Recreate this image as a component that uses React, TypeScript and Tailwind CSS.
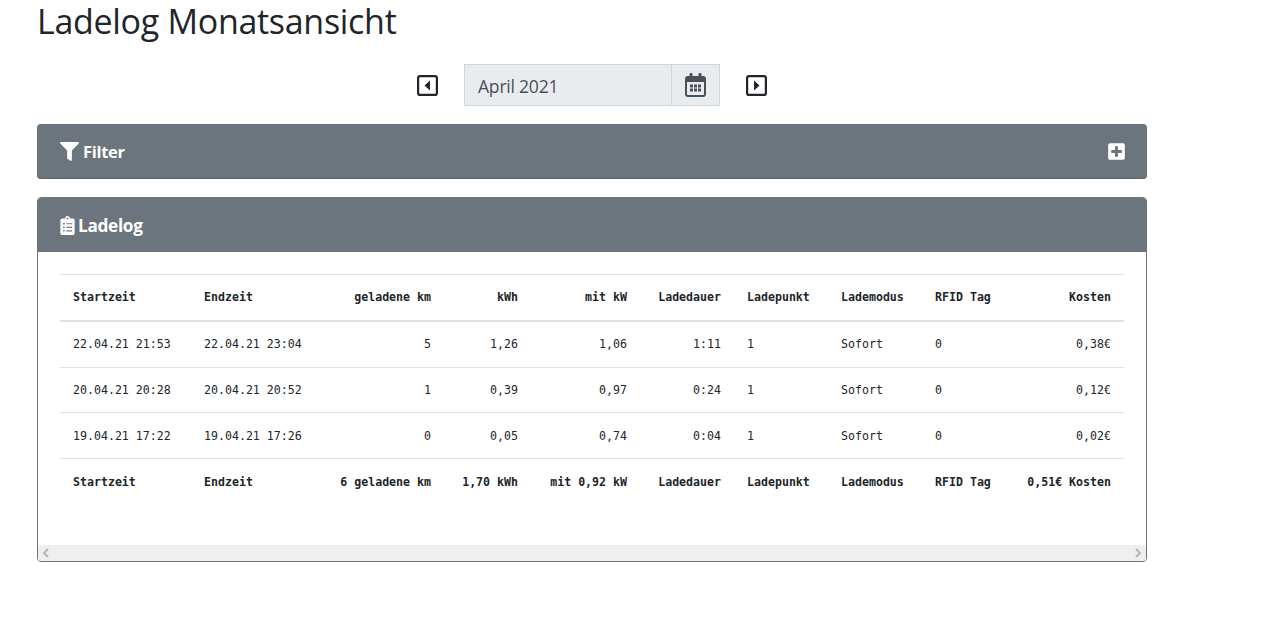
import React from "react";
import { FaFilter, FaClipboardList, FaPlusSquare } from "react-icons/fa";

const widths = [131, 124, 129, 87, 109, 94, 94, 94, 92, 110];
const align = ["l", "l", "r", "r", "r", "r", "l", "l", "l", "r"];
const head = ["Startzeit", "Endzeit", "geladene km", "kWh", "mit kW", "Ladedauer", "Ladepunkt", "Lademodus", "RFID Tag", "Kosten"];
const foot = ["Startzeit", "Endzeit", "6 geladene km", "1,70 kWh", "mit 0,92 kW", "Ladedauer", "Ladepunkt", "Lademodus", "RFID Tag", "0,51€ Kosten"];
const rows = [
  ["22.04.21 21:53", "22.04.21 23:04", "5", "1,26", "1,06", "1:11", "1", "Sofort", "0", "0,38€"],
  ["20.04.21 20:28", "20.04.21 20:52", "1", "0,39", "0,97", "0:24", "1", "Sofort", "0", "0,12€"],
  ["19.04.21 17:22", "19.04.21 17:26", "0", "0,05", "0,74", "0:04", "1", "Sofort", "0", "0,02€"],
];
const rowH = ["h-[47px]", "h-[45px]", "h-[46px]"];
const rowPad = ["pb-[0px]", "pt-[2px]", "pt-[2px]"];
const cell = (i: number) => (align[i] === "r" ? "text-right" : "text-left");

function Row({ cells, bold, pad, className }: { cells: string[]; bold?: boolean; pad?: string; className: string }) {
  return (
    <tr className={className}>
      {cells.map((c, i) => (
        <td key={i} className={`px-[13px] whitespace-nowrap ${pad ?? ""} ${cell(i)} ${bold ? "font-bold" : ""}`}>
          {c}
        </td>
      ))}
    </tr>
  );
}

function CaretBox({ dir }: { dir: "l" | "r" }) {
  return (
    <svg width="21" height="21" viewBox="0 0 21 21" className="text-[#212529]">
      <rect x="1.1" y="1.1" width="18.8" height="18.8" rx="2" fill="none" stroke="currentColor" strokeWidth="2.2" />
      <path d={dir === "l" ? "M13 5.5 V15.5 L7.5 10.5 Z" : "M8 5.5 V15.5 L13.5 10.5 Z"} fill="currentColor" />
    </svg>
  );
}

function CalendarIcon() {
  return (
    <svg width="21" height="24" viewBox="0 0 21 24" className="text-[#495057]">
      <rect x="1" y="4" width="19" height="19" rx="2" fill="none" stroke="currentColor" strokeWidth="2" />
      <rect x="1" y="4" width="19" height="5" fill="currentColor" />
      <rect x="4.5" y="0" width="3" height="6" rx="1" fill="currentColor" />
      <rect x="13.5" y="0" width="3" height="6" rx="1" fill="currentColor" />
      {[5, 9, 13].map((x) =>
        [11.5, 15.5].map((y) => <rect key={`${x}-${y}`} x={x} y={y} width="3" height="3" fill="currentColor" />)
      )}
    </svg>
  );
}

export default function App() {
  return (
    <div className="w-[1269px] h-[630px] bg-white overflow-hidden font-['Open_Sans','Noto_Sans',sans-serif] text-[#212529]">
      <div className="w-[1110px] ml-[37px]">
        <h1 className="text-[34px] leading-[46px] -mt-[2px] font-normal tracking-[-0.3px]">Ladelog Monatsansicht</h1>

        <div className="flex items-center justify-center mt-[20px] h-[42px]">
          <CaretBox dir="l" />
          <div className="flex h-[42px] w-[256px] mx-[26px] bg-[#e9ecef] border border-[#ced4da] text-[#495057]">
            <div className="flex-1 flex items-center pl-[13px] pt-[2px] text-[17.6px] tracking-[-0.25px]">April 2021</div>
            <div className="w-[48px] border-l border-[#ced4da] flex items-center justify-center">
              <CalendarIcon />
            </div>
          </div>
          <CaretBox dir="r" />
        </div>

        <div className="mt-[18px] h-[55px] rounded-[4px] bg-[#6c757d] border-b border-[#5d656c] text-white flex items-center justify-between pl-[23px] pr-[22px]">
          <div className="flex items-center gap-[4px] text-[16.5px] font-bold tracking-[-0.3px]">
            <FaFilter className="w-[19px] h-[19px]" />
            <span className="pt-[2px]">Filter</span>
          </div>
          <FaPlusSquare className="w-[17px] h-[19px]" />
        </div>

        <div className="mt-[18px] rounded-[4px] border border-[#6c757d] h-[365px] flex flex-col overflow-hidden">
          <div className="h-[54px] shrink-0 bg-[#6c757d] text-white flex items-center pl-[22px] gap-[3px] text-[17.2px] font-bold tracking-[-0.3px]">
            <FaClipboardList className="w-[15px] h-[19px]" />
            <span className="pt-[2px]">Ladelog</span>
          </div>
          <div className="flex-1 pt-[22px] pl-[22px]">
            <table className="border-collapse table-fixed w-[1064px] font-['DejaVu_Sans_Mono',monospace] text-[11.6px] text-[#212529]">
              <colgroup>
                {widths.map((w, i) => (
                  <col key={i} style={{ width: w }} />
                ))}
              </colgroup>
              <tbody>
                <Row cells={head} bold className="h-[46px] border-t border-b-2 border-[#dee2e6]" />
                {rows.map((r, i) => (
                  <Row key={i} cells={r} pad={rowPad[i]} className={`${rowH[i]} border-b border-[#dee2e6]`} />
                ))}
                <Row cells={foot} bold pad="pt-[2px]" className="h-[46px]" />
              </tbody>
            </table>
          </div>
          <div className="h-[16px] shrink-0 bg-[#efefef] flex items-center justify-between px-[4px] text-[#b5b5b5]">
            <svg width="8" height="10" viewBox="0 0 8 10"><path d="M6 1 L2 5 L6 9" fill="none" stroke="currentColor" strokeWidth="2" /></svg>
            <svg width="8" height="10" viewBox="0 0 8 10"><path d="M2 1 L6 5 L2 9" fill="none" stroke="currentColor" strokeWidth="2" /></svg>
          </div>
        </div>
      </div>
    </div>
  );
}
